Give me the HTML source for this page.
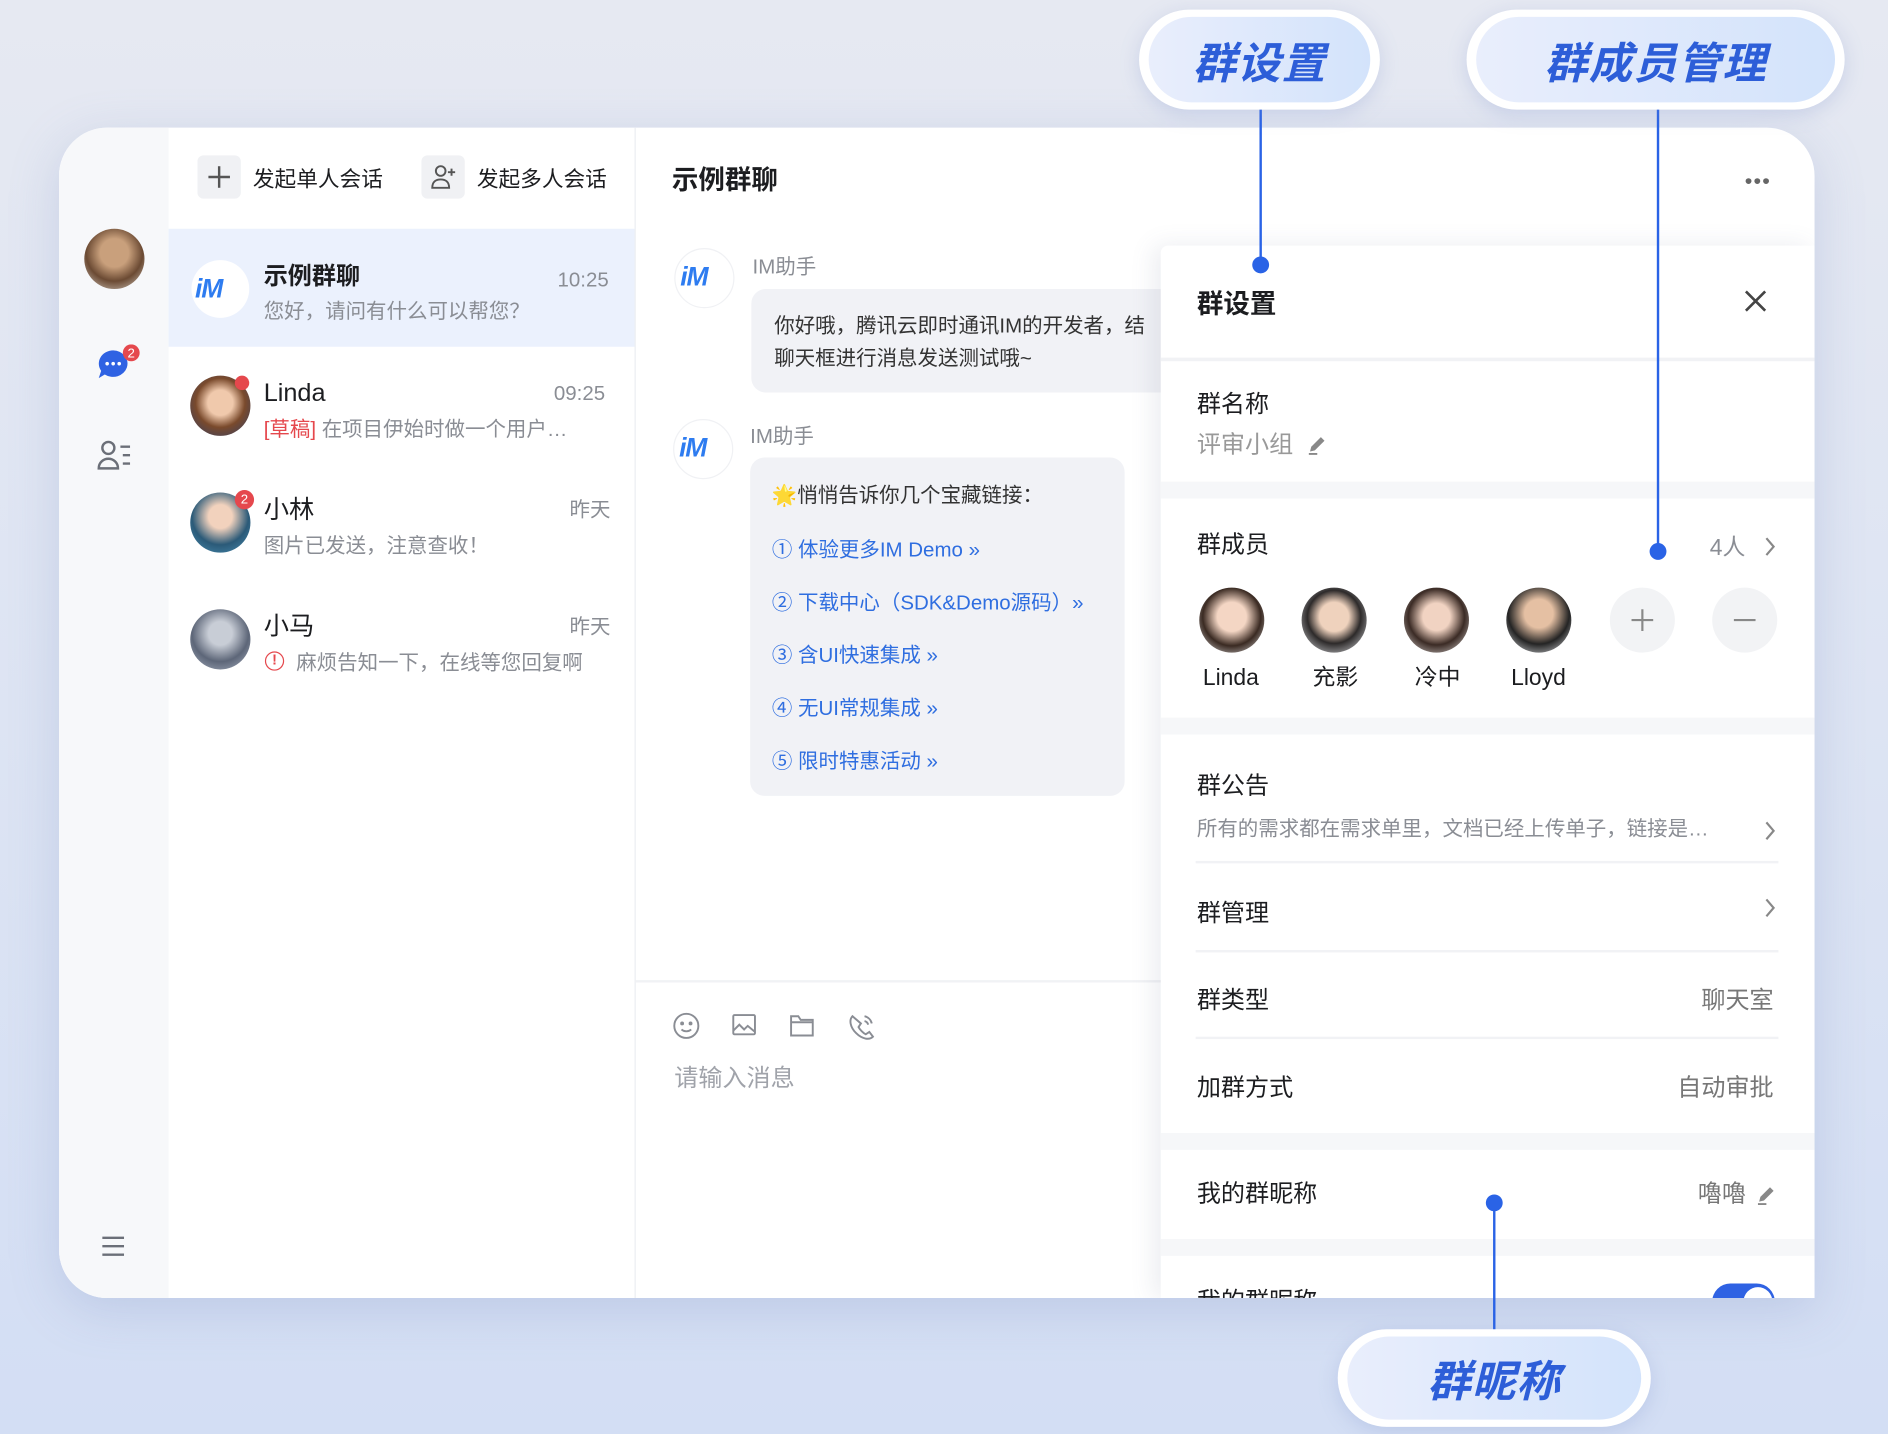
<!DOCTYPE html>
<html><head><meta charset="utf-8"><style>
html,body{margin:0;padding:0;width:1888px;height:1434px;overflow:hidden}
body{background:linear-gradient(180deg,#e6e9f2 0%,#dde4f3 50%,#d3def4 100%);font-family:"Liberation Sans","Noto Sans CJK SC",sans-serif;}
#w{position:absolute;left:0;top:0;width:1568px;height:1191px;transform:scale(1.20408);transform-origin:0 0}
.a{position:absolute}
.t{position:absolute;white-space:nowrap;line-height:24px;height:24px;margin-top:2px}
.card{left:49px;top:106px;width:1458px;height:972px;background:#fff;border-radius:40px 40px 0 40px;box-shadow:0 10px 40px rgba(120,140,190,.25);overflow:hidden}
.g{color:#8a8d94}
.b{color:#1c1d20}
.lk{color:#2f6ee0;font-size:17px}
.circ{position:absolute;border-radius:50%}
.band{position:absolute;left:0;width:543px;background:#f6f7f9}
.ln{position:absolute;left:29px;width:484px;height:2px;background:#f1f2f5}
.pill{position:absolute;background:#fff;border-radius:48px;box-shadow:0 4px 16px rgba(120,140,200,.25)}
.pill .in{position:absolute;left:8px;top:6px;right:8px;bottom:6px;border-radius:40px;background:linear-gradient(90deg,#e9eefc,#d3e3fb);display:flex;align-items:center;justify-content:center;color:#2d5ed8;font-weight:bold;font-style:italic;font-size:36px;letter-spacing:1px}
.vl{position:absolute;width:2px;background:#2a63e6}
.dot{position:absolute;width:14px;height:14px;border-radius:50%;background:#2a63e6}
</style></head><body><div id="w">

<div class="a card">
  <div class="a" style="left:0;top:0;width:91px;height:972px;background:#f7f8fa"></div>
  <div class="circ" style="left:21px;top:84px;width:50px;height:50px;background:radial-gradient(circle at 50% 40%,#c9a07c 0 30%,#6b4a33 60%,#d9d2c8 100%)"></div>
  <svg class="a" style="left:31px;top:180px" width="40" height="36" viewBox="0 0 40 36"><path d="M14 5a12 11 0 1 1 -7 20l-5 3 2-6a12 11 0 0 1 10-17z" fill="#2f62e3"/><circle cx="9" cy="16" r="1.5" fill="#fff"/><circle cx="14" cy="16" r="1.5" fill="#fff"/><circle cx="19" cy="16" r="1.5" fill="#fff"/><circle cx="29" cy="7" r="7" fill="#e5484d"/><text x="29" y="11" font-size="11" fill="#fff" text-anchor="middle" font-family="Liberation Sans">2</text></svg>
  <svg class="a" style="left:31px;top:257px" width="30" height="30" viewBox="0 0 30 30" fill="none" stroke="#6b6f78" stroke-width="2"><circle cx="10" cy="9" r="5"/><path d="M2 26c0-5 4-8 8-8s8 3 8 8z"/><path d="M20 8h8M22 15h6M22 22h6"/></svg>
  <svg class="a" style="left:35px;top:920px" width="20" height="18" viewBox="0 0 20 18" stroke="#6b6f78" stroke-width="2"><path d="M1 2h18M1 9h18M1 16h18"/></svg>

  <div class="a" style="left:478px;top:0;width:1px;height:972px;background:#eceef2"></div>
  <div class="a" style="left:115px;top:23px;width:36px;height:36px;background:#f0f1f4;border-radius:5px"></div>
  <svg class="a" style="left:124px;top:32px" width="18" height="18" stroke="#555" stroke-width="2"><path d="M9 0v18M0 9h18"/></svg>
  <div class="t b" style="left:161px;top:29px;font-size:18px">发起单人会话</div>
  <div class="a" style="left:301px;top:23px;width:36px;height:36px;background:#f0f1f4;border-radius:5px"></div>
  <svg class="a" style="left:307px;top:29px" width="24" height="24" viewBox="0 0 24 24" fill="none" stroke="#555" stroke-width="1.6"><circle cx="10" cy="7" r="4"/><path d="M3 21c0-5 3-7 7-7s7 2 7 7z"/><path d="M19 5v6M16 8h6"/></svg>
  <div class="t b" style="left:347px;top:29px;font-size:18px">发起多人会话</div>

  <div class="a" style="left:91px;top:84px;width:387px;height:98px;background:#ebf1fd"></div>
  <div class="circ" style="left:110px;top:110px;width:48px;height:48px;background:#fff"></div>
  <div class="t" style="left:113px;top:120px;font-size:22px;font-weight:bold;font-style:italic;color:#2e7cf0;letter-spacing:-1px">iM</div>
  <div class="t b" style="left:170px;top:110px;font-size:20px;font-weight:bold">示例群聊</div>
  <div class="t g" style="left:414px;top:113px;font-size:17px">10:25</div>
  <div class="t g" style="left:170px;top:139px;font-size:17px">您好，请问有什么可以帮您？</div>

  <div class="circ" style="left:109px;top:206px;width:50px;height:50px;background:radial-gradient(circle at 50% 45%,#f0c9ac 0 28%,#7a4a2c 55%,#2d3f6a 100%)"></div>
  <div class="circ" style="left:146px;top:206px;width:12px;height:12px;background:#e5484d"></div>
  <div class="t b" style="left:170px;top:207px;font-size:21px">Linda</div>
  <div class="t g" style="left:411px;top:207px;font-size:17px">09:25</div>
  <div class="t g" style="left:170px;top:237px;font-size:17px"><span style="color:#e5484d">[草稿]</span> 在项目伊始时做一个用户…</div>

  <div class="circ" style="left:109px;top:303px;width:50px;height:50px;background:radial-gradient(circle at 50% 40%,#f2d2bd 0 25%,#2b5a78 60%,#4a8fb3 100%)"></div>
  <div class="circ" style="left:146px;top:301px;width:16px;height:16px;background:#e5484d;color:#fff;font-size:11px;text-align:center;line-height:16px">2</div>
  <div class="t b" style="left:170px;top:304px;font-size:21px">小林</div>
  <div class="t g" style="left:424px;top:304px;font-size:17px">昨天</div>
  <div class="t g" style="left:170px;top:334px;font-size:17px">图片已发送，注意查收！</div>

  <div class="circ" style="left:109px;top:400px;width:50px;height:50px;background:radial-gradient(circle at 50% 40%,#c8cdd6 0 25%,#5d6678 60%,#a9b2c2 100%)"></div>
  <div class="t b" style="left:170px;top:401px;font-size:21px">小马</div>
  <div class="t g" style="left:424px;top:401px;font-size:17px">昨天</div>
  <div class="circ" style="left:171px;top:435px;width:16px;height:16px;border:1.6px solid #e5484d;box-sizing:border-box;color:#e5484d;font-size:12px;text-align:center;line-height:13px;font-weight:bold">!</div>
  <div class="t g" style="left:197px;top:431px;font-size:17px">麻烦告知一下，在线等您回复啊</div>

  <div class="t b" style="left:509px;top:29px;font-size:22px;font-weight:bold;height:26px;line-height:26px">示例群聊</div>
  <div class="t" style="left:1400px;top:30px;font-size:18px;color:#666;letter-spacing:1px">•••</div>
  <div class="circ" style="left:511px;top:100px;width:48px;height:48px;background:#fff;border:1px solid #f0f1f4"></div>
  <div class="t" style="left:516px;top:110px;font-size:22px;font-weight:bold;font-style:italic;color:#2e7cf0;letter-spacing:-1px">iM</div>
  <div class="t g" style="left:576px;top:102px;font-size:17px">IM助手</div>
  <div class="a" style="left:575px;top:134px;width:400px;height:86px;background:#f1f2f6;border-radius:12px"></div>
  <div class="t b" style="left:594px;top:151px;font-size:17px;color:#333">你好哦，腾讯云即时通讯IM的开发者，结</div>
  <div class="t b" style="left:594px;top:178px;font-size:17px;color:#333">聊天框进行消息发送测试哦~</div>

  <div class="circ" style="left:510px;top:242px;width:48px;height:48px;background:#fff;border:1px solid #f0f1f4"></div>
  <div class="t" style="left:515px;top:252px;font-size:22px;font-weight:bold;font-style:italic;color:#2e7cf0;letter-spacing:-1px">iM</div>
  <div class="t g" style="left:574px;top:243px;font-size:17px">IM助手</div>
  <div class="a" style="left:574px;top:274px;width:311px;height:281px;background:#f1f2f6;border-radius:12px"></div>
  <div class="t" style="left:592px;top:292px;font-size:17px;color:#333">🌟悄悄告诉你几个宝藏链接：</div>
  <div class="t lk" style="left:592px;top:337px">① 体验更多IM Demo »</div>
  <div class="t lk" style="left:592px;top:381px">② 下载中心（SDK&amp;Demo源码）»</div>
  <div class="t lk" style="left:592px;top:425px">③ 含UI快速集成 »</div>
  <div class="t lk" style="left:592px;top:469px">④ 无UI常规集成 »</div>
  <div class="t lk" style="left:592px;top:513px">⑤ 限时特惠活动 »</div>

  <div class="a" style="left:479px;top:708px;width:440px;height:2px;background:#f1f2f5"></div>
  <svg class="a" style="left:509px;top:734px" width="230" height="24" viewBox="0 0 230 24" fill="none" stroke="#8a8d94" stroke-width="1.6"><circle cx="12" cy="12" r="10"/><circle cx="8.5" cy="10" r=".8" fill="#8a8d94"/><circle cx="15.5" cy="10" r=".8" fill="#8a8d94"/><path d="M8 15c2 2 6 2 8 0"/><rect x="51" y="3" width="18" height="16" rx="1"/><path d="M51 16l5-5 4 4 3-3 6 5"/><path d="M99 4h6l2 3h10v13h-18z"/><path d="M99 9h18"/><path d="M150 4c-3 3-2 9 3 14s11 6 14 3l-3-4-3 2c-2-1-5-4-6-6l2-3z"/><path d="M160 4a8 8 0 0 1 6 6M160 8a4 4 0 0 1 3 3"/></svg>
  <div class="t" style="left:511px;top:776px;font-size:20px;color:#a0a3aa">请输入消息</div>

  <div class="a" style="left:915px;top:98px;width:543px;height:874px;background:#fff;box-shadow:-6px 0 20px rgba(100,110,140,.12);border-top-left-radius:6px;overflow:hidden">
    <div class="t b" style="left:30px;top:34px;font-size:22px;font-weight:bold;height:26px;line-height:26px">群设置</div>
    <svg class="a" style="left:484px;top:36px" width="20" height="20" stroke="#444" stroke-width="2.2"><path d="M2 2l16 16M18 2L2 18"/></svg>
    <div class="a" style="left:0;top:93px;width:543px;height:3px;background:#f1f2f5"></div>
    <div class="t b" style="left:30px;top:118px;font-size:20px">群名称</div>
    <div class="t g" style="left:30px;top:152px;font-size:20px;color:#999">评审小组</div>
    <svg class="a" style="left:121px;top:156px" width="18" height="18" viewBox="0 0 18 18"><path d="M3 15l1-4 8-8 3 3-8 8z" fill="#888"/><path d="M2 17h7" stroke="#888" stroke-width="1.5"/></svg>
    <div class="band" style="top:196px;height:14px"></div>
    <div class="t b" style="left:30px;top:235px;font-size:20px">群成员</div>
    <div class="t g" style="left:456px;top:238px;font-size:19px">4人</div>
    <svg class="a" style="left:500px;top:240px" width="12" height="20" stroke="#888" stroke-width="1.8" fill="none"><path d="M3 3l6 7-6 7"/></svg>
    <div class="circ" style="left:32px;top:284px;width:54px;height:54px;background:radial-gradient(circle at 50% 45%,#f4d6c4 0 30%,#3a2a22 60%,#e8e8ea 100%)"></div>
    <div class="circ" style="left:117px;top:284px;width:54px;height:54px;background:radial-gradient(circle at 50% 45%,#efd2bd 0 30%,#2d2a2a 55%,#e9ebef 100%)"></div>
    <div class="circ" style="left:202px;top:284px;width:54px;height:54px;background:radial-gradient(circle at 50% 45%,#f1d3c2 0 28%,#3b2b25 58%,#e7e3e1 100%)"></div>
    <div class="circ" style="left:287px;top:284px;width:54px;height:54px;background:radial-gradient(circle at 50% 40%,#e5c0a3 0 28%,#242424 60%,#e8eaee 100%)"></div>
    <div class="circ" style="left:373px;top:284px;width:54px;height:54px;background:#f2f3f5"></div>
    <svg class="a" style="left:390px;top:301px" width="20" height="20" stroke="#888" stroke-width="1.8"><path d="M10 1v18M1 10h18"/></svg>
    <div class="circ" style="left:458px;top:284px;width:54px;height:54px;background:#f2f3f5"></div>
    <svg class="a" style="left:475px;top:301px" width="20" height="20" stroke="#888" stroke-width="1.8"><path d="M1 10h18"/></svg>
    <div class="t b" style="left:35px;top:346px;font-size:19px">Linda</div>
    <div class="t b" style="left:126px;top:346px;font-size:19px">充影</div>
    <div class="t b" style="left:211px;top:346px;font-size:19px">冷中</div>
    <div class="t b" style="left:291px;top:346px;font-size:19px">Lloyd</div>
    <div class="band" style="top:392px;height:14px"></div>
    <div class="t b" style="left:30px;top:435px;font-size:20px">群公告</div>
    <div class="t g" style="left:30px;top:471px;font-size:17px">所有的需求都在需求单里，文档已经上传单子，链接是…</div>
    <svg class="a" style="left:500px;top:476px" width="12" height="20" stroke="#888" stroke-width="1.8" fill="none"><path d="M3 3l6 7-6 7"/></svg>
    <div class="ln" style="top:511px"></div>
    <div class="t b" style="left:30px;top:541px;font-size:20px">群管理</div>
    <svg class="a" style="left:500px;top:540px" width="12" height="20" stroke="#888" stroke-width="1.8" fill="none"><path d="M3 3l6 7-6 7"/></svg>
    <div class="ln" style="top:585px"></div>
    <div class="t b" style="left:30px;top:613px;font-size:20px">群类型</div>
    <div class="t g" style="left:449px;top:613px;font-size:20px;color:#777">聊天室</div>
    <div class="ln" style="top:657px"></div>
    <div class="t b" style="left:30px;top:686px;font-size:20px">加群方式</div>
    <div class="t g" style="left:429px;top:686px;font-size:20px;color:#777">自动审批</div>
    <div class="band" style="top:737px;height:14px"></div>
    <div class="t b" style="left:30px;top:774px;font-size:20px">我的群昵称</div>
    <div class="t g" style="left:446px;top:774px;font-size:20px;color:#777">嚕嚕</div>
    <svg class="a" style="left:494px;top:779px" width="18" height="18" viewBox="0 0 18 18"><path d="M3 15l1-4 8-8 3 3-8 8z" fill="#888"/><path d="M2 17h7" stroke="#888" stroke-width="1.5"/></svg>
    <div class="band" style="top:825px;height:14px"></div>
    <div class="t b" style="left:30px;top:863px;font-size:20px">我的群昵称</div>
    <div class="a" style="left:458px;top:862px;width:52px;height:30px;border-radius:15px;background:#2f62e3"></div>
    <div class="circ" style="left:484px;top:865px;width:24px;height:24px;background:#fff"></div>
  </div>
</div>

<div class="vl" style="left:1046px;top:88px;height:132px"></div>
<div class="dot" style="left:1040px;top:213px"></div>
<div class="vl" style="left:1376px;top:88px;height:370px"></div>
<div class="dot" style="left:1370px;top:451px"></div>
<div class="vl" style="left:1240px;top:999px;height:108px"></div>
<div class="dot" style="left:1234px;top:992px"></div>

<div class="pill" style="left:946px;top:8px;width:200px;height:83px"><div class="in">群设置</div></div>
<div class="pill" style="left:1218px;top:8px;width:314px;height:83px"><div class="in">群成员管理</div></div>
<div class="pill" style="left:1111px;top:1104px;width:260px;height:81px"><div class="in">群昵称</div></div>

</div></body></html>
